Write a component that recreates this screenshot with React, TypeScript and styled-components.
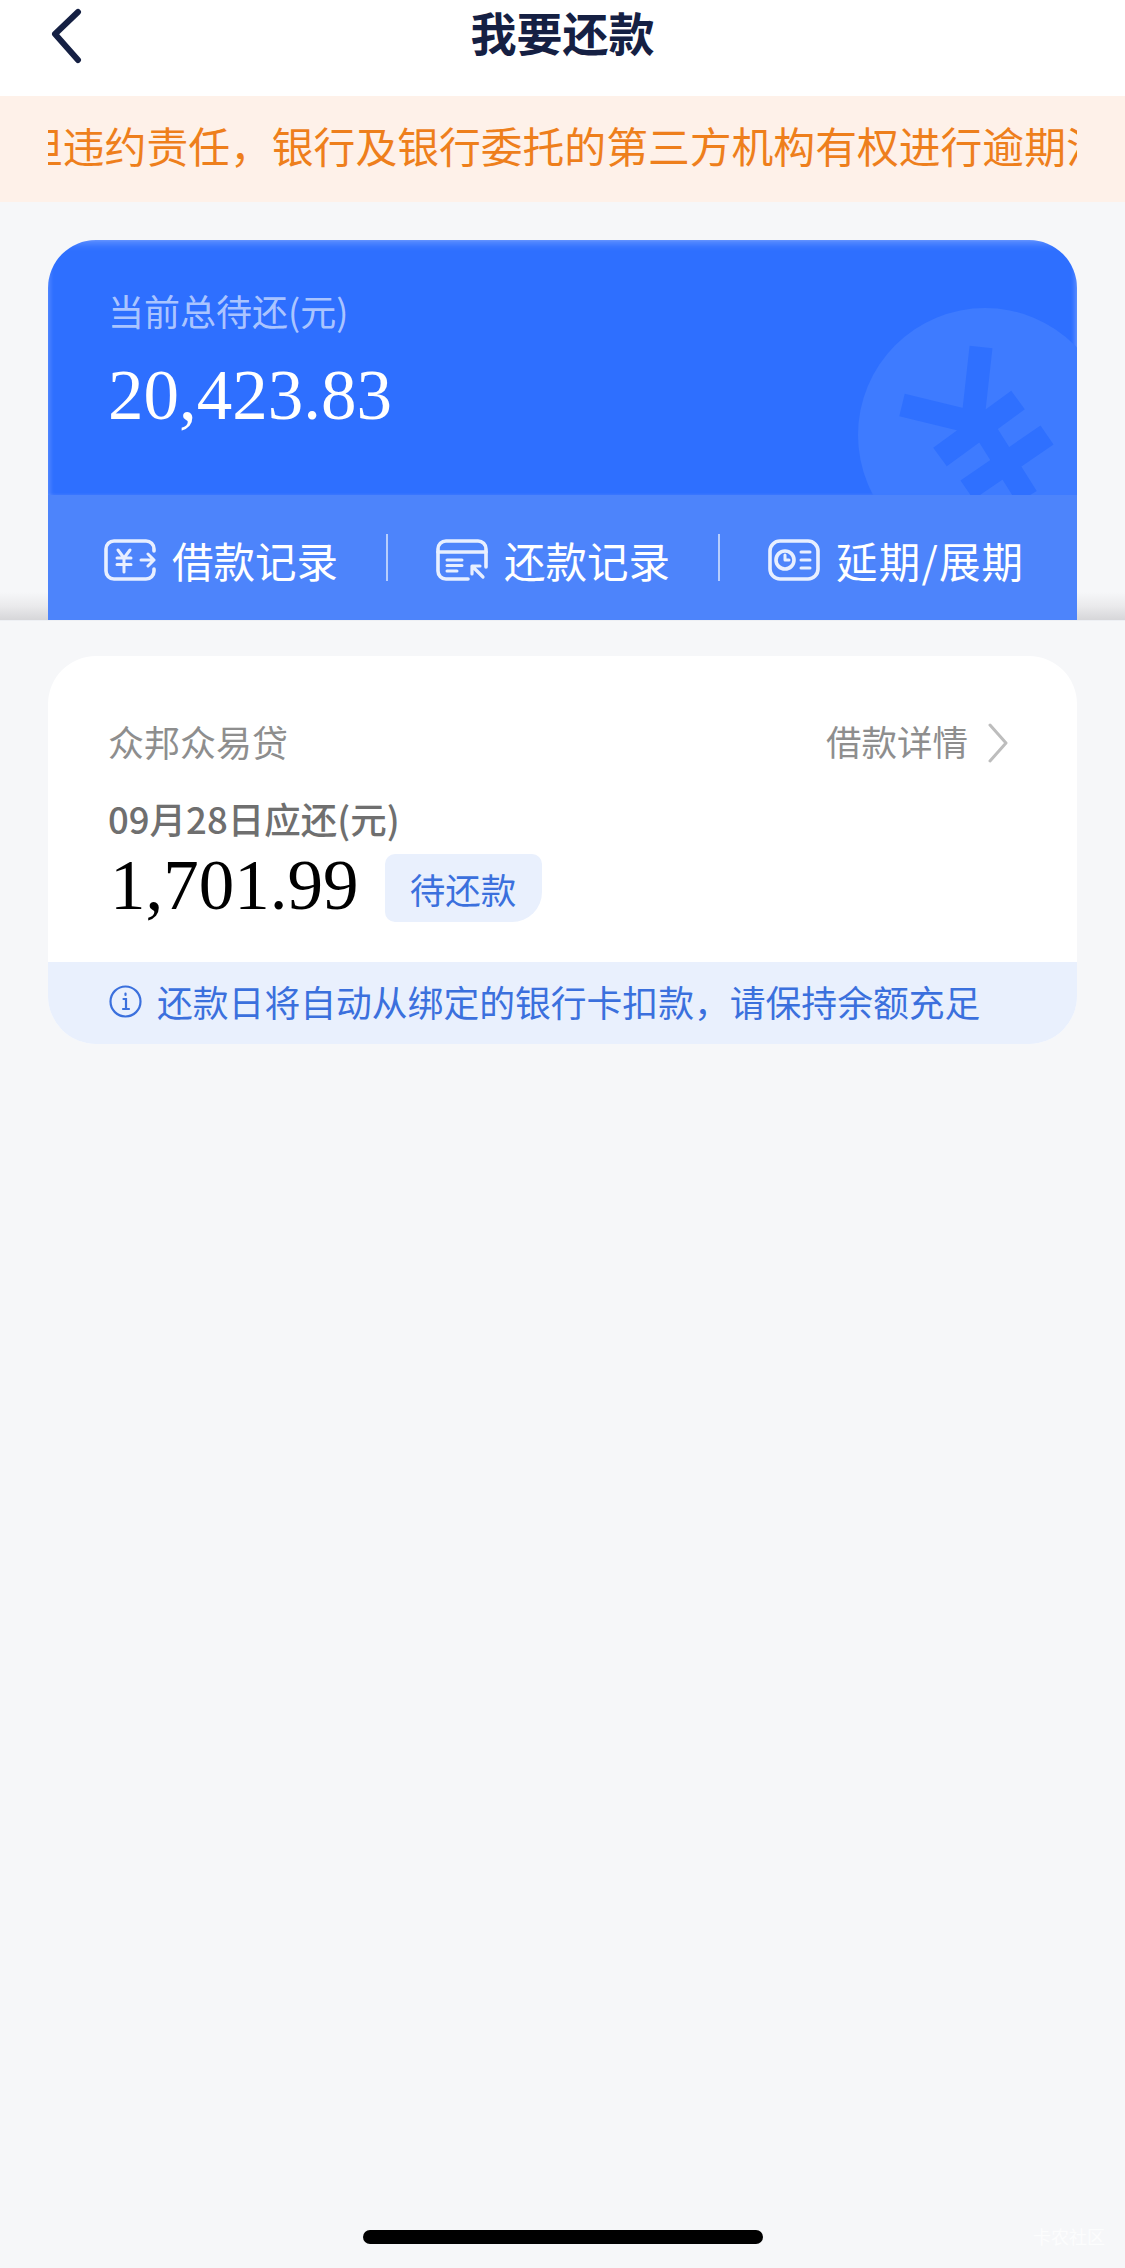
import { Fragment } from "react";
import styled, { createGlobalStyle } from "styled-components";

const GlobalStyle = createGlobalStyle`
  html, body {
    margin: 0;
    padding: 0;
    background: #f6f7f9;
  }
  * {
    box-sizing: border-box;
  }
`;

const Page = styled.div`
  display: flex;
  flex-direction: column;
  width: 1125px;
  min-height: 2268px;
  background: #f6f7f9;
  font-family: "Noto Sans CJK SC", "Noto Sans", sans-serif;
`;

const NavBar = styled.header`
  display: flex;
  align-items: flex-start;
  justify-content: center;
  position: relative;
  height: 96px;
  background: #fff;
`;

const BackIcon = styled.svg`
  position: absolute;
  left: 46px;
  top: 4px;
  width: 42px;
  height: 60px;
`;

const Title = styled.h1`
  margin: 0;
  font-size: 46px;
  line-height: 62px;
  font-weight: 700;
  color: #152043;
`;

const NoticeBar = styled.div`
  height: 106px;
  padding: 0 48px 8px;
  display: flex;
  align-items: center;
  background: #fef1e9;
`;

const NoticeClip = styled.div`
  flex: 1;
  overflow: hidden;
`;

const NoticeText = styled.p<{ $offset: number }>`
  margin: 0;
  white-space: nowrap;
  font-size: 41.8px;
  line-height: 60px;
  color: #ee7f1c;
  transform: translateX(${(p) => p.$offset}px);
`;

const TopSection = styled.section`
  padding: 38px 48px 0;
  background: linear-gradient(
    to bottom,
    #f6f7f9 0,
    #f6f7f9 390px,
    #eaeaec 404px,
    #d6d6d9 418px
  );
  border-bottom: 1px solid #eef0f4;
`;

const HeroCard = styled.div`
  display: flex;
  flex-direction: column;
  height: 380px;
  border-radius: 48px 48px 0 0;
  overflow: hidden;
  background: #2e6fff;
`;

const HeroTop = styled.div`
  position: relative;
  height: 255px;
  padding: 47px 60px 0;
  color: #fff;
  box-shadow: inset 0 6px 8px -3px rgba(255, 255, 255, 0.28),
    inset -4px 0 5px -2px rgba(255, 255, 255, 0.2),
    inset 4px 0 5px -2px rgba(255, 255, 255, 0.14);
`;

const CoinMark = styled.svg`
  position: absolute;
  right: 0;
  top: 0;
  width: 277px;
  height: 255px;
`;

const HeroLabel = styled.div`
  font-size: 36px;
  line-height: 46px;
  color: rgba(255, 255, 255, 0.62);
`;

const HeroAmount = styled.div`
  margin-top: 20px;
  font-family: "Liberation Serif", serif;
  font-size: 71px;
  line-height: 84px;
  color: #fff;
`;

const ActionRow = styled.nav`
  display: flex;
  align-items: center;
  gap: 48px;
  height: 125px;
  padding: 5px 0 0 56px;
  background: #4d84fb;
`;

const ActionItem = styled.div<{ $spacing: number }>`
  display: flex;
  align-items: center;
  gap: 16px;
  font-size: 41.5px;
  line-height: 50px;
  letter-spacing: ${(p) => p.$spacing}px;
  color: #fff;
  white-space: nowrap;
`;

const ActionIcon = styled.svg`
  width: 52px;
  height: 42px;
  flex: none;
`;

const ActionDivider = styled.span`
  width: 2px;
  height: 47px;
  margin-top: -5px;
  flex: none;
  background: rgba(255, 255, 255, 0.6);
`;

const Content = styled.main`
  flex: 1;
  padding: 35px 48px 0;
`;

const LoanCard = styled.article`
  border-radius: 48px;
  overflow: hidden;
  background: #fff;
`;

const LoanBody = styled.div`
  height: 306px;
  padding: 60px 60px 0;
`;

const LoanHeader = styled.div`
  display: flex;
  align-items: center;
  justify-content: space-between;
  padding-right: 8px;
  height: 50px;
`;

const LoanName = styled.div`
  font-size: 36px;
  line-height: 50px;
  color: #8e8e8e;
`;

const DetailLink = styled.div`
  display: flex;
  align-items: center;
  gap: 19px;
  font-size: 35.5px;
  line-height: 50px;
  color: #8e8e8e;
`;

const DetailChevron = styled.svg`
  width: 22px;
  height: 40px;
  margin-top: 4px;
`;

const DueLabel = styled.div`
  margin-top: 30px;
  font-size: 36.500px;
  line-height: 46px;
  font-weight: 500;
  color: #6f6f6f;
`;

const AmountRow = styled.div`
  display: flex;
  align-items: flex-start;
  gap: 26px;
  margin-top: 9px;
`;

const DueAmount = styled.div`
  font-family: "Liberation Serif", serif;
  font-size: 71px;
  line-height: 68px;
  padding-left: 2px;
  color: #000;
`;

const StatusBadge = styled.span`
  display: flex;
  align-items: center;
  justify-content: center;
  width: 157px;
  height: 68px;
  margin-top: 3px;
  border-radius: 10px 10px 30px 10px;
  background: #e9f0fd;
  font-size: 35.5px;
  color: #3b70dd;
`;

const LoanTip = styled.div`
  display: flex;
  align-items: center;
  gap: 15px;
  height: 82px;
  padding: 0 0 4px 61px;
  background: #e9f0fd;
  font-size: 35.8px;
  color: #3b70dd;
  white-space: nowrap;
`;

const TipIcon = styled.svg`
  width: 33px;
  height: 33px;
  flex: none;
`;

const Footer = styled.footer`
  position: relative;
  display: flex;
  justify-content: center;
  padding-bottom: 24px;
`;

const HomeIndicator = styled.div`
  width: 400px;
  height: 14px;
  border-radius: 7px;
  background: #000;
`;

const Watermark = styled.span`
  position: absolute;
  right: 20px;
  bottom: 20px;
  font-size: 18px;
  line-height: 24px;
  color: rgba(255, 255, 255, 0.75);
`;

const LoanIcon = () => (
  <ActionIcon viewBox="0 0 52 42" fill="none" stroke="#e8efff" strokeWidth="3.6" strokeLinecap="round" strokeLinejoin="round">
    <path d="M50 12V10a8 8 0 0 0-8-8H10a8 8 0 0 0-8 8v22a8 8 0 0 0 8 8h32a8 8 0 0 0 8-8v-2" />
    <path d="M14 11l6 8 6-8M20 19v14M13 19h14M13 25.500h14" strokeWidth="3" />
    <path d="M37 21h13M44 15l6 6-6 6" strokeWidth="3" />
  </ActionIcon>
);

const RepayIcon = () => (
  <ActionIcon viewBox="0 0 52 42" fill="none" stroke="#e8efff" strokeWidth="3.6" strokeLinecap="round" strokeLinejoin="round">
    <path d="M32 40H10a8 8 0 0 1-8-8V10a8 8 0 0 1 8-8h32a8 8 0 0 1 8 8v18" />
    <path d="M2 13h48" />
    <path d="M11 21h15M11 26.500h15M11 32h10" strokeWidth="3" />
    <path d="M36 27h8M36 27v8M37 28l10 10" strokeWidth="3.2" />
  </ActionIcon>
);

const ExtendIcon = () => (
  <ActionIcon viewBox="0 0 52 42" fill="none" stroke="#e8efff" strokeWidth="3.6" strokeLinecap="round" strokeLinejoin="round">
    <rect x="2" y="2" width="48" height="38" rx="10" />
    <circle cx="17" cy="21" r="9" />
    <path d="M17 16v5h4" strokeWidth="3" />
    <path d="M33 13h9M33 21h9M33 29h9" strokeWidth="3" />
  </ActionIcon>
);

const actions = [
  { label: "借款记录", icon: <LoanIcon />, spacing: 0 },
  { label: "还款记录", icon: <RepayIcon />, spacing: 0 },
  { label: "延期/展期", icon: <ExtendIcon />, spacing: 1.2 },
];

export default function App() {
  return (
    <Page>
      <GlobalStyle />
      <NavBar>
        <BackIcon viewBox="0 0 42 60" fill="none" stroke="#152043" strokeWidth="6" strokeLinecap="round" strokeLinejoin="round">
          <path d="M32 8L9 30l23 26" />
        </BackIcon>
        <Title>我要还款</Title>
      </NavBar>

      <NoticeBar>
        <NoticeClip>
          <NoticeText $offset={-27}>担违约责任，银行及银行委托的第三方机构有权进行逾期法</NoticeText>
        </NoticeClip>
      </NoticeBar>

      <TopSection>
        <HeroCard>
          <HeroTop>
            <CoinMark viewBox="800 240 277 255" fill="none">
              <circle cx="985" cy="435" r="127" fill="#3e7bff" />
              <g stroke="#2f70ff" strokeWidth="23">
                <path d="M902 405l78 19M981 347l-8 72M940 457l78-57M967 490l80-55M983 427l44 70" />
              </g>
            </CoinMark>
            <HeroLabel>当前总待还(元)</HeroLabel>
            <HeroAmount>20,423.83</HeroAmount>
          </HeroTop>
          <ActionRow>
            {actions.map((action, index) => (
              <Fragment key={action.label}>
                {index > 0 && <ActionDivider />}
                <ActionItem $spacing={action.spacing}>
                  {action.icon}
                  {action.label}
                </ActionItem>
              </Fragment>
            ))}
          </ActionRow>
        </HeroCard>
      </TopSection>

      <Content>
        <LoanCard>
          <LoanBody>
            <LoanHeader>
              <LoanName>众邦众易贷</LoanName>
              <DetailLink>
                借款详情
                <DetailChevron viewBox="0 0 22 40" fill="none" stroke="#bdbdbd" strokeWidth="3" strokeLinecap="round" strokeLinejoin="round">
                  <path d="M3 2l16 18L3 38" />
                </DetailChevron>
              </DetailLink>
            </LoanHeader>
            <DueLabel>09月28日应还(元)</DueLabel>
            <AmountRow>
              <DueAmount>1,701.99</DueAmount>
              <StatusBadge>待还款</StatusBadge>
            </AmountRow>
          </LoanBody>
          <LoanTip>
            <TipIcon viewBox="0 0 33 33" fill="none" stroke="#3b70dd" strokeWidth="2.2" strokeLinecap="round">
              <circle cx="16.500" cy="16.500" r="15" />
              <path d="M14.500 14h2.500v10M14 24h6M16.500 8.500v1.500" />
            </TipIcon>
            还款日将自动从绑定的银行卡扣款，请保持余额充足
          </LoanTip>
        </LoanCard>
      </Content>

      <Footer>
        <HomeIndicator />
        <Watermark>卡农社区</Watermark>
      </Footer>
    </Page>
  );
}
